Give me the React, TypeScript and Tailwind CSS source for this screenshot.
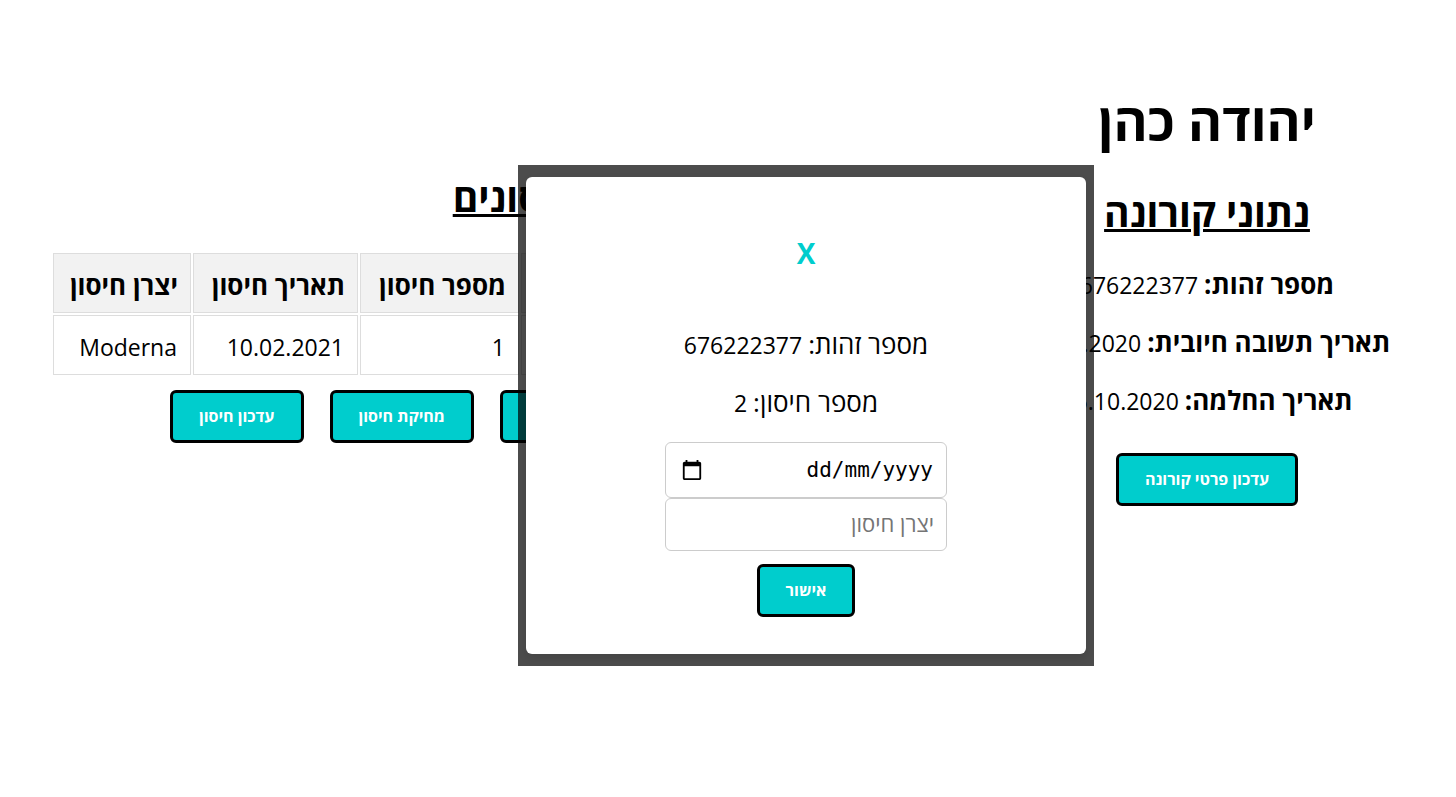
import type { ReactNode } from "react";

const vaccinations = [{ index: "1", date: "10.02.2021", maker: "Moderna" }];

function ActionButton({ children, type = "button" }: { children: ReactNode; type?: "button" | "submit" }) {
  return (
    <button
      type={type}
      className="h-[53px] cursor-pointer whitespace-nowrap rounded-md border-3 border-black bg-[#00cdcd] px-[26px] pb-0.5 text-base leading-6 font-bold text-white"
    >
      {children}
    </button>
  );
}

function Detail({ label, value }: { label: string; value: string }) {
  return (
    <p className="whitespace-nowrap text-[23px] leading-[34px]">
      <strong className="text-[26px] leading-6 font-bold">{label}:</strong> {value}
    </p>
  );
}

function FormFact({ label, value }: { label: string; value: string }) {
  return (
    <p className="whitespace-nowrap text-[23px] leading-[34px]">
      <span className="text-[26px] leading-6">{label}:</span> {value}
    </p>
  );
}

function CalendarIcon() {
  return (
    <svg viewBox="0 0 24 24" className="size-[22px]" fill="currentColor" aria-hidden="true">
      <path d="M20 3h-1V1h-2v2H7V1H5v2H4c-1.1 0-2 .9-2 2v16c0 1.1.9 2 2 2h16c1.1 0 2-.9 2-2V5c0-1.1-.9-2-2-2zm0 18H4V8h16v13z" />
    </svg>
  );
}

const headCell =
  "border border-[#dddddd] bg-[#f2f2f2] px-3 pt-[14px] pb-[10px] text-start text-[26px] leading-[34px] font-bold whitespace-nowrap";
const bodyCell =
  "border border-[#dddddd] px-[13px] pt-[14px] pb-[10px] text-start text-[23px] leading-[34px] whitespace-nowrap";

function VaccinationDialog() {
  return (
    <div
      role="dialog"
      aria-label="הוספת חיסון"
      className="absolute left-[518px] top-[165px] w-[576px] bg-black/70 px-2 py-3"
    >
      <form className="flex flex-col items-center rounded-md bg-white px-5 pb-[37px] pt-14 shadow-[0_4px_8px_rgba(0,0,0,0.1)]">
        <button
          type="button"
          className="h-10 cursor-pointer px-3 text-[28px] leading-10 font-bold text-[#00cdcd]"
        >
          X
        </button>
        <div className="mt-[55px] flex flex-col items-center gap-6">
          <FormFact label="מספר זהות" value="676222377" />
          <FormFact label="מספר חיסון" value="2" />
        </div>
        <div className="mt-[22px] flex h-14 w-[282px] items-center rounded-md border border-[#cccccc] ps-[13px] pe-[15px]">
          <input
            aria-label="תאריך חיסון"
            placeholder="dd/mm/yyyy"
            dir="ltr"
            className="min-w-0 flex-1 text-right font-['DejaVu_Sans_Mono',monospace] text-[21px] leading-7 outline-none placeholder:text-black"
          />
          <button type="button" aria-label="תאריך" className="cursor-pointer">
            <CalendarIcon />
          </button>
        </div>
        <input
          aria-label="יצרן חיסון"
          placeholder="יצרן חיסון"
          className="h-[53px] w-[282px] rounded-md border border-[#cccccc] px-3 pb-1 text-[22px] leading-7 outline-none placeholder:text-[#757575]"
        />
        <div className="mt-[13px]">
          <ActionButton type="submit">אישור</ActionButton>
        </div>
      </form>
    </div>
  );
}

export default function App() {
  return (
    <div
      dir="rtl"
      lang="he"
      className="relative min-h-screen bg-white font-['Open_Sans','Noto_Sans',sans-serif] text-black"
    >
      <main className="flex items-start ps-16 pe-[51px] pt-[85px]">
        <section className="flex w-[370px] shrink-0 flex-col items-center">
          <h1 className="text-[52px] leading-[72px] font-bold">יהודה כהן</h1>
          <h2 className="mt-7 text-[39px] leading-[54px] font-bold underline decoration-3">נתוני קורונה</h2>
          <div className="mt-[29px] flex flex-col items-center gap-6">
            <Detail label="מספר זהות" value="676222377" />
            <Detail label="תאריך תשובה חיובית" value="01.10.2020" />
            <Detail label="תאריך החלמה" value="15.10.2020" />
          </div>
          <div className="mt-[35px]">
            <ActionButton>עדכון פרטי קורונה</ActionButton>
          </div>
        </section>

        <section className="ms-[27px] mt-[85px] min-w-0 flex-1">
          <h2 className="ps-[14px] text-center text-[39px] leading-[54px] font-bold underline decoration-3">
            חיסונים
          </h2>
          <table className="mt-[27px] w-full table-fixed border-separate border-spacing-[2px]">
            <colgroup>
              <col />
              <col className="w-[159px]" />
              <col className="w-[165px]" />
              <col className="w-[138px]" />
            </colgroup>
            <thead>
              <tr>
                <th className={headCell} aria-label="בחירה" />
                <th className={headCell}>מספר חיסון</th>
                <th className={headCell}>תאריך חיסון</th>
                <th className={headCell}>יצרן חיסון</th>
              </tr>
            </thead>
            <tbody>
              {vaccinations.map((v) => (
                <tr key={v.index}>
                  <td className={bodyCell}>
                    <input type="radio" name="vaccination" aria-label={`חיסון ${v.index}`} />
                  </td>
                  <td className={bodyCell}>{v.index}</td>
                  <td className={bodyCell}>{v.date}</td>
                  <td className={bodyCell}>{v.maker}</td>
                </tr>
              ))}
            </tbody>
          </table>
          <div className="mt-[13px] flex justify-end gap-[26px] pe-[119px]">
            <ActionButton>הוספת חיסון</ActionButton>
            <ActionButton>מחיקת חיסון</ActionButton>
            <ActionButton>עדכון חיסון</ActionButton>
          </div>
        </section>
      </main>
      <VaccinationDialog />
    </div>
  );
}
